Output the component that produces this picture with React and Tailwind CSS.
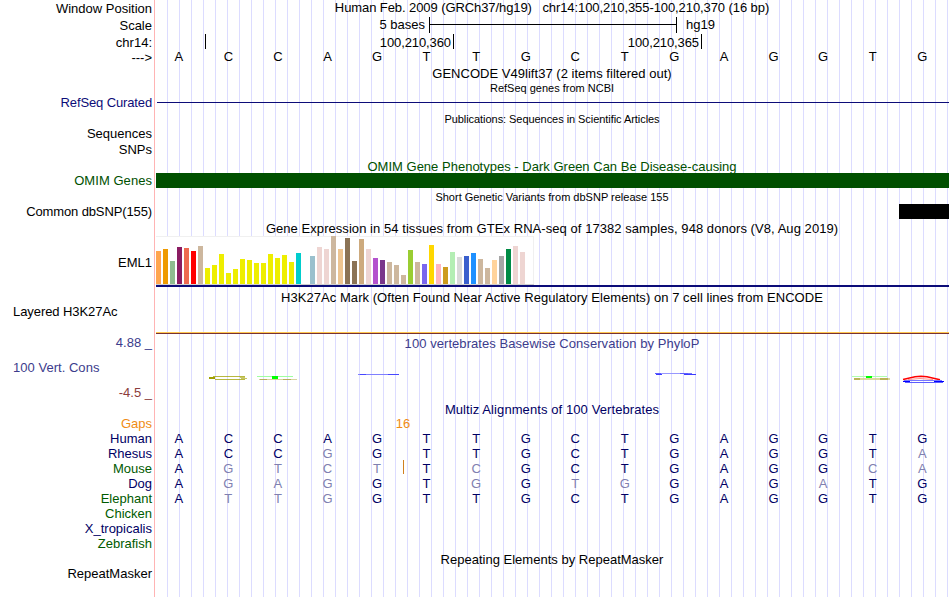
const DARK = 'text-[#0c0c78]';

const labels = [
  ['Window Position', 'mt-px', 'text-black'],
  ['Scale', 'mt-0.5', 'text-black'],
  ['chr14:', 'mt-0.5', 'text-black'],
  ['--->', '', 'text-black'],
  ['RefSeq Curated', 'mt-[30px] tracking-[-0.13px]', DARK],
  ['Sequences', 'mt-4', 'text-black'],
  ['SNPs', 'mt-px', 'text-black'],
  ['OMIM Genes', 'mt-4 tracking-[0.05px]', 'text-[#005000]'],
  ['Common dbSNP(155)', 'mt-4 tracking-[-0.12px]', 'text-black'],
  ['EML1', 'mt-9', 'text-black'],
  ['Layered H3K27Ac', 'mt-[34px] self-start ml-[13px] tracking-[-0.07px]', 'text-black'],
  ['4.88 _', 'mt-4', 'text-[#3c3c8c]'],
  ['100 Vert. Cons', 'mt-2.5 self-start ml-[13px] tracking-[0.03px]', 'text-[#3c3c8c]'],
  ['-4.5 _', 'mt-2.5', 'text-[#8c3c3c]'],
  ['Gaps', 'mt-4', 'text-[#f08c14]'],
  ['Human', '', 'text-[#000064]'],
  ['Rhesus', '', 'text-[#000064]'],
  ['Mouse', '', 'text-[#005a00]'],
  ['Dog', '', 'text-[#000064]'],
  ['Elephant', '', 'text-[#005a00]'],
  ['Chicken', '', 'text-[#005a00]'],
  ['X_tropicalis', '', 'text-[#000064]'],
  ['Zebrafish', '', 'text-[#005a00]'],
  ['RepeatMasker', 'mt-[15px]', 'text-black'],
];

// Median expression per tissue: [bar height, colour]
const tissues = [
  [33, '#ffa54f'], [35, '#ee9a00'], [23, '#8fbc8f'], [37, '#8b1c62'], [36, '#ee6a50'],
  [33, '#ff0000'], [38, '#cdb79e'], [16, '#eeee00'], [19, '#eeee00'], [30, '#eeee00'],
  [11, '#eeee00'], [15, '#eeee00'], [25, '#eeee00'], [24, '#eeee00'], [21, '#eeee00'],
  [21, '#eeee00'], [30, '#eeee00'], [26, '#eeee00'], [29, '#eeee00'], [22, '#eeee00'],
  [31, '#00cdcd'], [0, '#ee82ee'], [28, '#9ac0cd'], [37, '#eed5d2'], [35, '#eed5d2'],
  [48, '#cdb79e'], [35, '#eec591'], [46, '#8b7355'], [23, '#8b7355'], [45, '#cdaa7d'],
  [35, '#eed5d2'], [26, '#b452cd'], [24, '#7a378b'], [22, '#cdb79e'], [19, '#cdb79e'],
  [9, '#cdb79e'], [34, '#9acd32'], [22, '#cdb79e'], [20, '#7a67ee'], [39, '#ffd700'],
  [20, '#ffb6c1'], [17, '#cd9b1d'], [32, '#b4eeb4'], [27, '#d9d9d9'], [28, '#3a5fcd'],
  [31, '#1e90ff'], [25, '#cdb79e'], [16, '#cdb79e'], [24, '#ffd39b'], [28, '#a6a6a6'],
  [35, '#008b45'], [38, '#eed5d2'], [32, '#eed5d2'], [0, '#ff00ff'],
];

const reference = 'ACCAGTTGCTGAGGTG';
const alignments = [
  'ACCAGTTGCTGAGGTG',
  'ACCGGTTGCTGAGGTA',
  'AGTCTTCGCTGAGGCA',
  'AGAGGTGGTGGAGATG',
  'ATTGGTTGCTGAGGTG',
];

function Title({ children, className = '' }) {
  return <div className={`mr-px h-[15px] whitespace-pre text-center ${className}`}>{children}</div>;
}

function SmallTitle({ children, className = '' }) {
  return (
    <div
      className={`mr-px h-[13px] whitespace-pre text-center text-[11px] leading-[13px] ${className}`}
    >
      {children}
    </div>
  );
}

function Bases({ sequence, aligned = false }) {
  return (
    <div className="-ml-[2px] grid h-[15px] w-[793px] origin-[50%_12px] scale-y-[1.04] grid-cols-16 text-center">
      {sequence.split('').map((base, i) => {
        const match = base === reference[i];
        const color = !aligned ? 'text-black' : match ? 'text-[#000064]' : 'text-[#8080b0]';
        return (
          <span key={i} className={color}>
            {base}
          </span>
        );
      })}
    </div>
  );
}

function Expression() {
  return (
    <div>
      <div className="flex h-[48px] w-[378px] items-end gap-0.5 bg-white shadow-[inset_-1px_1px_0_#f0f0f0]">
        {tissues.map(([height, color], i) => (
          <div key={i} className="w-[5px] shrink-0" style={{ height, backgroundColor: color }} />
        ))}
      </div>
      <div className="h-px w-[378px] bg-[#d0d0d0]" />
      <div className="h-0.5 bg-[#0c0c78]" />
    </div>
  );
}

function Conservation() {
  return (
    <svg className="block" width="793" height="51" viewBox="156 351 793 51" fill="none">
      <g stroke="#a0a000">
        <path d="M213 376.5H245" opacity=".75" />
        <path d="M215 379.5H245" opacity=".75" />
        <path d="M209 378H215" strokeWidth="2" />
        <path d="M240 377.5H245M241 378.5H247" opacity=".6" />
      </g>
      <path d="M257 376.5H293" stroke="#a0ffa0" />
      <path d="M259 379.5H297" stroke="#c8c078" opacity=".7" />
      <path d="M260 379.5H267M283 379.5H291" stroke="#a09a30" opacity=".6" />
      <rect x="272" y="376" width="6" height="3" fill="#00ff00" />
      <path d="M358 374.5H399" stroke="#8080ff" />
      <path d="M360 374.5H366M388 374.5H399" stroke="#4848ff" />
      <path d="M655 373.5H688" stroke="#9898ff" />
      <path d="M656 374.5H662M684 374.5H696" stroke="#3c3cff" />
      <path d="M655 373.5H661M680 373.5H692" stroke="#5050ff" opacity=".8" />
      <path d="M852 376.5H887" stroke="#b0ffb0" />
      <path d="M854 379H890" stroke="#d0cc80" strokeWidth="1.4" />
      <path d="M854 379H860M880 379H888" stroke="#b0a840" strokeWidth="1.4" />
      <rect x="866" y="376" width="6" height="2" fill="#00ff00" />
      <path d="M903 379.6L915 376.8L921 376.3L927 376.8L940 379.8" stroke="#ff0000" strokeWidth="1.5" />
      <path d="M908 379.5L920 378.5L933 379.5" stroke="#ff9090" />
      <path d="M904 380.5H942" stroke="#7878ff" />
      <path d="M903 381.5H910M934 381.5H944" stroke="#0000ff" />
      <path d="M905 382.5H943" stroke="#5c5cff" />
    </svg>
  );
}

export default function App() {
  return (
    <div className="flex h-[597px] w-[950px] overflow-hidden bg-white font-['Liberation_Sans',Arial,sans-serif] text-[13px] leading-[15px] text-black">
      <div className="flex w-[154px] shrink-0 flex-col items-end pr-0.5">
        {labels.map(([text, spacing, color]) => (
          <div key={text} className={`h-[15px] shrink-0 whitespace-pre ${spacing} ${color}`}>
            {text}
          </div>
        ))}
      </div>
      <div className="w-px shrink-0 bg-[#ffb4b4]" />
      <div className="ml-px w-[793px] shrink-0 bg-[repeating-linear-gradient(to_right,transparent_0,transparent_11px,#dcdcff_11px,#dcdcff_12px)]">
        <Title className="tracking-[-0.085px]">
          {'Human Feb. 2009 (GRCh37/hg19)   chr14:100,210,355-100,210,370 (16 bp)'}
        </Title>
        <div className="mt-0.5 flex h-4">
          <div className="w-[269px] text-right">5 bases</div>
          <div className="ml-1 flex h-4 w-[248px] border-x border-black">
            <div className="mt-[7px] h-px w-full bg-black" />
          </div>
          <div className="ml-[9px]">hg19</div>
        </div>
        <div className="mt-px flex h-[15px] leading-[17px] tracking-[-0.1px]">
          <div className="w-[50px] border-r border-black" />
          <div className="w-[248px] border-r border-black pr-0.5 text-right">100,210,360</div>
          <div className="w-[248px] border-r border-black pr-0.5 text-right">100,210,365</div>
        </div>
        <Bases sequence={reference} />
        <Title className="mt-0.5 tracking-[0.025px]">GENCODE V49lift37 (2 items filtered out)</Title>
        <SmallTitle className="mt-px">RefSeq genes from NCBI</SmallTitle>
        <div className="mt-[7px] ml-px h-px bg-[#0c0c78]" />
        <SmallTitle className="mt-2.5 tracking-[-0.055px]">
          Publications: Sequences in Scientific Articles
        </SmallTitle>
        <Title className="mt-[33px] tracking-[0.01px] text-[#005000]">
          OMIM Gene Phenotypes - Dark Green Can Be Disease-causing
        </Title>
        <div className="-mt-px h-[15px] bg-[#005000]" />
        <SmallTitle className="mt-[3px]">Short Genetic Variants from dbSNP release 155</SmallTitle>
        <div className="ml-auto h-[15px] w-[50px] bg-black" />
        <Title className="mt-0.5 tracking-[0.055px]">
          Gene Expression in 54 tissues from GTEx RNA-seq of 17382 samples, 948 donors (V8, Aug 2019)
        </Title>
        <Expression />
        <Title className="mt-[3px] tracking-[0.05px]">
          H3K27Ac Mark (Often Found Near Active Regulatory Elements) on 7 cell lines from ENCODE
        </Title>
        <div className="mt-[27px] h-px bg-[#ffc850]" />
        <div className="h-px bg-[#783232]" />
        <Title className="mt-0.5 tracking-[0.06px] text-[#3c3c8c]">
          100 vertebrates Basewise Conservation by PhyloP
        </Title>
        <Conservation />
        <Title className="tracking-[0.09px] text-[#000064]">Multiz Alignments of 100 Vertebrates</Title>
        <div className="-mt-px flex h-[15px] text-[#f08c14]">
          <div className="w-[494px] text-center">16</div>
        </div>
        {alignments.map((sequence, i) => (
          <div key={i} className="relative">
            <Bases sequence={sequence} aligned />
            {i === 2 && <div className="absolute -top-px left-[247px] h-[14px] w-px bg-[#d08020]" />}
          </div>
        ))}
        <Title className="mt-[46px] tracking-[0.01px]">Repeating Elements by RepeatMasker</Title>
      </div>
    </div>
  );
}
